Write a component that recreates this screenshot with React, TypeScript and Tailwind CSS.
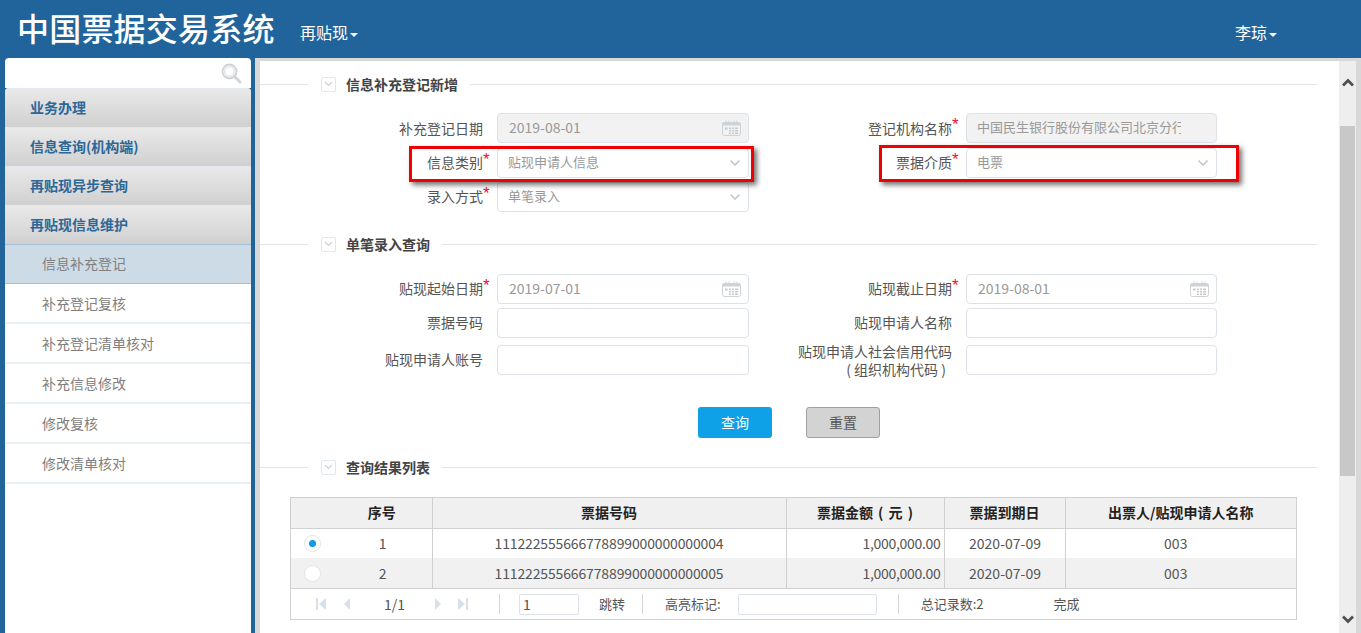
import React from "react";

const font = { fontFamily: '"Noto Sans CJK SC", "Liberation Sans", sans-serif' };

function Chevron({ className = "" }: { className?: string }) {
  return (
    <svg width="12" height="8" viewBox="0 0 12 8" className={className}>
      <path d="M1.5 1.5 L6 6 L10.5 1.5" fill="none" stroke="#c4c8cc" strokeWidth="1.6" />
    </svg>
  );
}

function Calendar() {
  return (
    <svg width="19" height="16" viewBox="0 0 19 16" className="shrink-0">
      <rect x="0.5" y="2.5" width="18" height="13" rx="2" fill="none" stroke="#d0d3d6" />
      <rect x="0.5" y="2.5" width="18" height="3" fill="#d0d3d6" />
      <path d="M4 0.5v3M15 0.5v3M7 0.5v3M12 0.5v3" stroke="#d0d3d6" />
      <path
        d="M7 7.5h2v1.5h-2zM10 7.5h2v1.5h-2zM13 7.5h3v1.5h-3zM7 10h2v1.5h-2zM10 10h2v1.5h-2zM13 10h3v1.5h-3zM7 12.5h2V14h-2zM10 12.5h2V14h-2zM13 12.5h3V14h-3z"
        fill="#c6c9cc"
      />
      <rect x="3" y="7.5" width="2.5" height="2" fill="#c6c9cc" />
    </svg>
  );
}

function SectionTitle({ title, className = "" }: { title: string; className?: string }) {
  return (
    <div className={`flex items-center h-[16px] pr-[22px] ${className}`}>
      <div className="w-[48px] h-px bg-[#dfe2e8]" />
      <div className="ml-[13px] w-[15px] h-[15px] border border-[#dfe6ee] rounded-[2px] flex items-center justify-center">
        <svg width="9" height="6" viewBox="0 0 9 6">
          <path d="M1 1 L4.5 4.5 L8 1" fill="none" stroke="#c9d3de" strokeWidth="1.2" />
        </svg>
      </div>
      <div className="ml-[10px] text-[14px] font-bold text-[#444] whitespace-nowrap leading-none">{title}</div>
      <div className="h-px bg-[#dfe2e8] ml-[12px] flex-1" />
    </div>
  );
}

function Star({ show }: { show?: boolean }) {
  return (
    <span
      className="w-[14px] shrink-0 self-start text-[#f01030] text-[17px] leading-none mt-[3px] h-[15px]"
      style={{ fontFamily: '"Liberation Sans", sans-serif' }}
    >
      {show ? "*" : ""}
    </span>
  );
}

function Label({ width, first, children }: { width: string; first?: boolean; children: React.ReactNode }) {
  return (
    <div
      className={`${width} shrink-0 text-right text-[14px] leading-[18px] text-[#555] whitespace-nowrap ${
        first ? "pt-[6px]" : "pt-[5px]"
      }`}
    >
      {children}
    </div>
  );
}

function Box({
  value,
  disabled,
  kind,
  width = "w-[252px]",
  clip,
}: {
  value?: string;
  disabled?: boolean;
  kind?: "date" | "select";
  width?: string;
  clip?: boolean;
}) {
  return (
    <div
      className={`${width} h-[30px] shrink-0 rounded-[4px] border border-[#dde2e8] flex items-center pr-[7px] text-[#999] overflow-hidden ${
        kind === "date" ? "pl-[11px] text-[14px]" : "pl-[10px] text-[13px]"
      } ${disabled ? "bg-[#f2f2f2]" : "bg-white"}`}
    >
      <span className={`flex-1 whitespace-nowrap overflow-hidden pb-[2px] ${clip ? "mr-[28px]" : ""}`}>{value}</span>
      {kind === "date" && <Calendar />}
      {kind === "select" && <Chevron className="shrink-0" />}
    </div>
  );
}

function Row({ className = "", children }: { className?: string; children: React.ReactNode }) {
  return <div className={`flex ${className}`}>{children}</div>;
}

function MenuHead({ label }: { label: string }) {
  return (
    <div className="h-[39px] flex items-center pl-[25px] pb-[2px] text-[14px] font-bold text-[#2d6797] bg-gradient-to-b from-[#e9e9e9] to-[#d0d0d0] border-t border-[#e3e8ee]">
      {label}
    </div>
  );
}

function MenuItem({ label, active }: { label: string; active?: boolean }) {
  return (
    <div
      className={`h-[40px] flex items-center pl-[37px] text-[14px] text-[#808080] ${
        active ? "bg-[#cddbe7] border-y border-[#a3c0da] pb-[2px]" : "bg-white border-b-2 border-[#e8eff5]"
      }`}
    >
      {label}
    </div>
  );
}

function Caret() {
  return <span className="inline-block ml-[2px] align-middle border-x-[4px] border-x-transparent border-t-[4px] border-t-white" />;
}

function Radio({ on }: { on?: boolean }) {
  return (
    <div className="mx-auto w-[17px] h-[17px] rounded-full bg-white border border-[#e0e5ea] flex items-center justify-center">
      {on && <div className="w-[7px] h-[7px] rounded-full bg-[#0f9ae8]" />}
    </div>
  );
}

function PagerIcon({ d }: { d: string }) {
  return (
    <svg width="10" height="12" viewBox="0 0 10 12" className="shrink-0">
      <path d={d} fill="#d9e0e8" />
    </svg>
  );
}

function TableRow({ n, code, alt, on }: { n: number; code: string; alt?: boolean; on?: boolean }) {
  const bg = alt ? "bg-[#f1f1f1]" : "bg-white";
  return (
    <tr className={`${bg} h-[30px] text-[14px] text-[#555]`}>
      <td className="p-0"><Radio on={on} /></td>
      <td className="p-0 text-center border-r border-[#d0d0d0]">{n}</td>
      <td className="p-0 text-center border-r border-[#d0d0d0] tracking-[-0.14px]">{code}</td>
      <td className="p-0 text-right pr-[3px] border-r border-[#d0d0d0] tracking-[-0.3px]">1,000,000.00</td>
      <td className="p-0 text-center pl-[1px] border-r border-[#d0d0d0]">2020-07-09</td>
      <td className="p-0 text-center pr-[10px]">003</td>
    </tr>
  );
}

function Th({ children, last, className = "" }: { children?: React.ReactNode; last?: boolean; className?: string }) {
  return (
    <th className={`p-0 text-[14px] font-bold text-[#222] text-center border-b border-[#d0d0d0] ${last ? "" : "border-r"} ${className}`}>
      {children}
    </th>
  );
}

function Divider({ className = "" }: { className?: string }) {
  return <div className={`w-px h-[20px] bg-[#d5d5d5] shrink-0 ${className}`} />;
}

export default function App() {
  return (
    <div className="relative w-[1361px] h-[633px] overflow-hidden bg-white flex flex-col" style={font}>
      <header className="h-[58px] shrink-0 bg-[#21649b] flex items-center text-white">
        <div className="ml-[17px] text-[32px] font-medium leading-none tracking-[0.2px] w-[257px] whitespace-nowrap -mt-[4px]">
          中国票据交易系统
        </div>
        <div className="ml-[26px] text-[16px] leading-none mt-[6px] whitespace-nowrap">
          再贴现<Caret />
        </div>
        <div className="ml-[877px] text-[16px] leading-none mt-[6px] whitespace-nowrap">
          李琼<Caret />
        </div>
      </header>

      <div className="flex flex-1 min-h-0">
        <aside className="w-[255px] shrink-0 bg-[#21649b] pl-[5px] pr-[4px] flex flex-col">
          <div className="h-[30px] shrink-0 bg-white rounded-t-[4px] flex items-center justify-end pr-[9px]">
            <svg width="21" height="21" viewBox="0 0 21 21">
              <circle cx="8.5" cy="8.5" r="7" fill="#fff" stroke="#cfd2d6" strokeWidth="1.8" />
              <circle cx="8.5" cy="8.5" r="4.8" fill="none" stroke="#e4e6e8" strokeWidth="1.6" />
              <path d="M13.5 13.5 L19 19" stroke="#cfd2d6" strokeWidth="2.8" strokeLinecap="round" />
            </svg>
          </div>
          <div className="flex-1 bg-white flex flex-col rounded-t-[4px] overflow-hidden">
            <MenuHead label="业务办理" />
            <MenuHead label="信息查询(机构端)" />
            <MenuHead label="再贴现异步查询" />
            <MenuHead label="再贴现信息维护" />
            <MenuItem label="信息补充登记" active />
            <MenuItem label="补充登记复核" />
            <MenuItem label="补充登记清单核对" />
            <MenuItem label="补充信息修改" />
            <MenuItem label="修改复核" />
            <MenuItem label="修改清单核对" />
          </div>
        </aside>

        <div className="w-[5px] shrink-0 bg-[#d8d8d8]" />

        <main className="flex-1 flex flex-col min-w-0">
          <div className="h-[3px] shrink-0 bg-[#d8d8d8]" />
          <div className="flex-1 flex min-h-0">
            <div className="w-[1079px] shrink-0 overflow-hidden pt-[15px]">
              <SectionTitle title="信息补充登记新增" />

              <Row className="mt-[21px]">
                <Label first width="w-[223px]">补充登记日期</Label>
                <Star />
                <Box value="2019-08-01" disabled kind="date" />
                <Label first width="w-[203px]">登记机构名称</Label>
                <Star show />
                <Box value="中国民生银行股份有限公司北京分行" disabled width="w-[251px]" clip />
              </Row>
              <Row className="mt-[5px]">
                <Label width="w-[223px]">信息类别</Label>
                <Star show />
                <Box value="贴现申请人信息" kind="select" />
                <Label width="w-[203px]">票据介质</Label>
                <Star show />
                <Box value="电票" kind="select" width="w-[251px]" />
              </Row>
              <Row className="mt-[4px]">
                <Label width="w-[223px]">录入方式</Label>
                <Star show />
                <Box value="单笔录入" kind="select" />
              </Row>

              <SectionTitle title="单笔录入查询" className="mt-[24px]" />

              <Row className="mt-[22px]">
                <Label width="w-[223px]">贴现起始日期</Label>
                <Star show />
                <Box value="2019-07-01" kind="date" />
                <Label width="w-[203px]">贴现截止日期</Label>
                <Star show />
                <Box value="2019-08-01" kind="date" width="w-[251px]" />
              </Row>
              <Row className="mt-[4px]">
                <Label width="w-[223px]">票据号码</Label>
                <Star />
                <Box />
                <Label width="w-[203px]">贴现申请人名称</Label>
                <Star />
                <Box width="w-[251px]" />
              </Row>
              <Row className="mt-[7px]">
                <Label width="w-[223px]">贴现申请人账号</Label>
                <Star />
                <Box />
                <div className="w-[203px] shrink-0 -mt-[3px] text-[14px] leading-[18px] text-[#555] flex flex-col items-end whitespace-pre">
                  <span>贴现申请人社会信用代码</span>
                  <span className="pr-[6px]">( 组织机构代码 )</span>
                </div>
                <Star />
                <Box width="w-[251px]" />
              </Row>

              <div className="flex mt-[29px] pl-[438px]">
                <button className="w-[74px] h-[31px] rounded-[3px] bg-[#0ea1e8] text-white text-[14px]">查询</button>
                <button className="ml-[34px] w-[74px] h-[31px] rounded-[3px] bg-[#d3d3d3] border border-[#a0a0a0] text-[#555] text-[14px]">
                  重置
                </button>
              </div>

              <SectionTitle title="查询结果列表" className="mt-[21px]" />

              <div className="ml-[30px] mt-[22px] w-[1007px] border border-[#d0d0d0]">
                <table className="w-full table-fixed border-collapse">
                  <colgroup>
                    <col className="w-[43px]" />
                    <col className="w-[98px]" />
                    <col className="w-[354px]" />
                    <col className="w-[158px]" />
                    <col className="w-[121px]" />
                    <col />
                  </colgroup>
                  <thead>
                    <tr className="h-[30px] bg-[#f0f0f0]">
                      <th className="p-0 border-b border-[#d0d0d0]" />
                      <Th className="pr-[2px]">序号</Th>
                      <Th>票据号码</Th>
                      <Th className="whitespace-pre [word-spacing:2px]">票据金额 ( 元 )</Th>
                      <Th>票据到期日</Th>
                      <Th last>出票人/贴现申请人名称</Th>
                    </tr>
                  </thead>
                  <tbody>
                    <TableRow n={1} code="111222555666778899000000000004" on />
                    <TableRow n={2} code="111222555666778899000000000005" alt />
                  </tbody>
                </table>
                <div className="h-[31px] border-t border-[#d0d0d0] flex items-center text-[13px] text-[#555] whitespace-nowrap">
                  <div className="ml-[25px]"><PagerIcon d="M0 0h2v12H0zM10 0v12L3 6z" /></div>
                  <div className="ml-[16px]"><PagerIcon d="M8 0v12L2 6z" /></div>
                  <span className="ml-[32px] w-[40px] text-[14px]">1/1</span>
                  <div className="ml-[9px]"><PagerIcon d="M2 0v12L8 6z" /></div>
                  <div className="ml-[15px]"><PagerIcon d="M0 0v12L7 6zM8 0h2v12H8z" /></div>
                  <Divider className="ml-[31px]" />
                  <div className="ml-[19px] w-[60px] h-[21px] border border-[#dde2e8] rounded-[2px] pl-[3px] text-[14px] leading-[19px]">1</div>
                  <span className="ml-[20px]">跳转</span>
                  <Divider className="ml-[17px]" />
                  <span className="ml-[22px]">高亮标记:</span>
                  <div className="ml-[17px] w-[139px] h-[21px] border border-[#dde2e8] rounded-[2px]" />
                  <Divider className="ml-[21px]" />
                  <span className="ml-[22px]">总记录数:2</span>
                  <span className="ml-[70px]">完成</span>
                </div>
              </div>
            </div>

            <div className="w-[17px] shrink-0 bg-[#eeeeee] flex flex-col items-center">
              <div className="h-[65px] w-full shrink-0 flex justify-center pt-[17px]">
                <svg width="12" height="9" viewBox="0 0 12 9">
                  <path d="M1 7.5 L6 2.5 L11 7.5" fill="none" stroke="#505050" strokeWidth="2.8" />
                </svg>
              </div>
              <div className="w-[15px] h-[350px] bg-[#c8c8c8]" />
              <div className="flex-1" />
              <div className="h-[18px] w-full shrink-0 flex justify-center">
                <svg width="12" height="9" viewBox="0 0 12 9">
                  <path d="M1 1.5 L6 6.5 L11 1.5" fill="none" stroke="#505050" strokeWidth="2.8" />
                </svg>
              </div>
            </div>
            <div className="w-[5px] shrink-0 bg-[#d8d8d8]" />
          </div>
        </main>
      </div>

      <div className="absolute left-[409px] top-[146px] w-[345px] h-[36px] border-[3px] border-[#f00000] shadow-[3px_3px_5px_rgba(0,0,0,0.55)] pointer-events-none" />
      <div className="absolute left-[879px] top-[145px] w-[360px] h-[37px] border-[3px] border-[#f00000] shadow-[3px_3px_5px_rgba(0,0,0,0.55)] pointer-events-none" />
    </div>
  );
}
